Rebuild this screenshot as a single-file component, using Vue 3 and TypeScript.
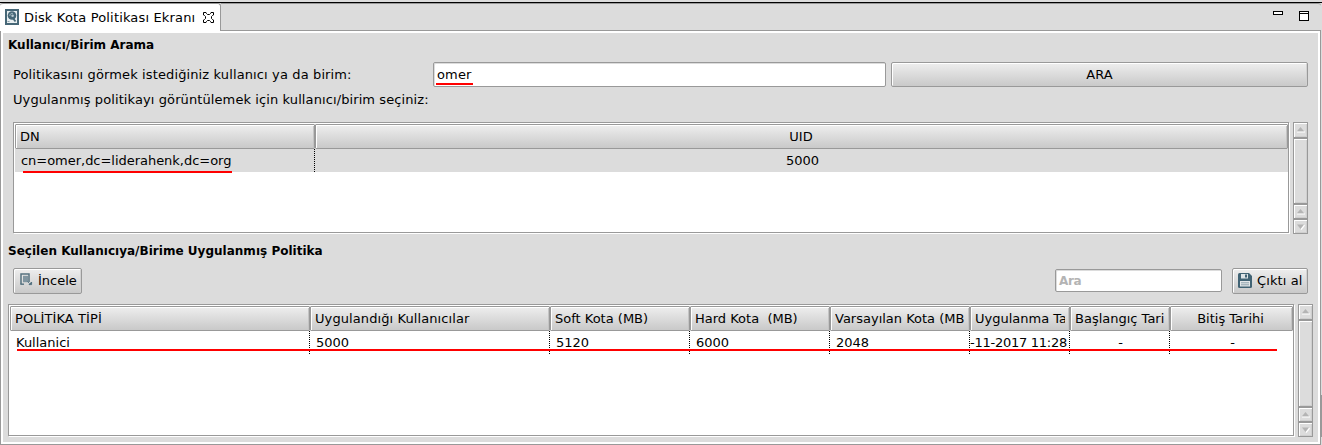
<script setup lang="ts">
interface Column {
  title: string
  value: string
  kind?: string
}

const columns: Column[] = [
  { title: 'POLİTİKA TİPİ', value: 'Kullanici', kind: 'wide' },
  { title: 'Uygulandığı Kullanıcılar', value: '5000', kind: 'wide' },
  { title: 'Soft Kota (MB)', value: '5120' },
  { title: 'Hard Kota  (MB)', value: '6000' },
  { title: 'Varsayılan Kota (MB', value: '2048' },
  { title: 'Uygulanma Ta', value: '-11-2017 11:28', kind: 'date' },
  { title: 'Başlangıç Tari', value: '-', kind: 'dash' },
  { title: 'Bitiş Tarihi', value: '-', kind: 'center' },
]
const scrollParts: string[] = ['up', 'thumb', 'up', 'down']
</script>

<template>
  <div class="window">
    <div class="tabbar">
      <div class="tab">
        <svg class="tab-icon" width="14" height="16" viewBox="0 0 14 16">
          <rect x="1" y="1" width="12" height="14" fill="#e9eff1" stroke="#466777" stroke-width="2" />
          <circle cx="7" cy="6.5" r="4.3" fill="#466777" />
          <path d="M4.8 6.8a2.4 2.4 0 0 1 3-2.4" fill="none" stroke="#a9bdc6" />
          <circle cx="7.6" cy="6.8" r="1.3" fill="#b9c9d0" />
          <path d="M7.5 8.5l3 4" stroke="#466777" stroke-width="1.8" />
          <path d="M2.5 12.5h2" stroke="#8ba1ab" />
        </svg>
        <span class="tab-title">Disk Kota Politikası Ekranı</span>
        <svg class="close" width="11" height="11" viewBox="0 0 11 11">
          <path d="M.5 .5h2.5l.5 1l1 1h2l1-1l.5-1h2.5v2.5l-1 .5l-1 1v2l1 1l1 .5v2.5h-2.5l-.5-1l-1-1h-2l-1 1l-.5 1h-2.5v-2.5l1-.5l1-1v-2l-1-1l-1-.5z" fill="#fff" stroke="#000" />
        </svg>
      </div>
      <div class="strip">
        <svg width="36" height="10" viewBox="0 0 36 10" shape-rendering="crispEdges">
          <path d="M.5 .5h9v3h-9zM26.5 .5h9v9h-9zM27 2.5h8" fill="#fff" stroke="#000" />
        </svg>
      </div>
    </div>

    <div class="content">
      <h2 class="first-heading">Kullanıcı/Birim Arama</h2>
      <div class="search-row">
        <label>Politikasını görmek istediğiniz kullanıcı ya da birim:</label>
        <div class="field name-field">omer<i class="mark"></i></div>
        <div class="button search-button">ARA</div>
      </div>
      <p class="hint">Uygulanmış politikayı görüntülemek için kullanıcı/birim seçiniz:</p>
      <div class="table-row users-row">
        <div class="table users">
          <div class="tr head">
            <div class="th">DN</div>
            <div class="th centered">UID</div>
          </div>
          <div class="tr body selected">
            <div class="td dn">cn=omer,dc=liderahenk,dc=org</div>
            <div class="td centered">5000</div>
          </div>
          <i class="mark"></i>
        </div>
        <div class="scrollbar">
          <div v-for="(part, i) in scrollParts" :key="i" :class="['part', part]">
            <svg v-if="part !== 'thumb'" width="9" height="6" viewBox="0 0 9 6">
              <template v-if="part === 'up'">
                <path d="M1 5h8" stroke="#fff" />
                <path d="M4.5 0L8 4.3H1z" fill="#b4b4b4" />
              </template>
              <template v-else>
                <path d="M8.5 1L5 5.5" stroke="#fff" stroke-width="1.5" />
                <path d="M4.5 5L8 .5H1z" fill="#b4b4b4" />
              </template>
            </svg>
          </div>
        </div>
      </div>
      <h2 class="second-heading">Seçilen Kullanıcıya/Birime Uygulanmış Politika</h2>
      <div class="toolbar">
        <div class="button inspect">
          <svg width="13" height="13" viewBox="0 0 13 13">
            <path d="M1 11V1h8v8" fill="none" stroke="#55717f" stroke-width="1.5" />
            <path d="M.3 11.2h3.7" stroke="#55717f" stroke-width="1.4" />
            <path d="M3 2.8h5v6.4H3z" fill="#8095a0" />
            <path d="M7.5 8.5l2 2M9 11.6h2.6V9z" fill="#466777" stroke="#466777" stroke-width=".8" />
          </svg>
          <span>İncele</span>
        </div>
        <div class="field filter">Ara</div>
        <div class="button export">
          <svg width="14" height="15" viewBox="0 0 14 15">
            <path d="M0 1.5Q0 0 1.5 0H11l3 3v10.5q0 1.5-1.5 1.5h-11Q0 15 0 13.5z" fill="#416374" />
            <path d="M3 1h7v4.5H3z" fill="#dce3e6" />
            <path d="M7 1.5h2v3H7z" fill="#416374" />
            <path d="M2 8h10v5.5H2z" fill="#e3e7e9" />
            <path d="M3 9.8h8M3 11.8h8" stroke="#8da1ab" />
          </svg>
          <span>Çıktı al</span>
        </div>
      </div>
      <div class="table-row policy-row">
        <div class="table policies">
          <div class="tr head">
            <div v-for="c in columns" :key="c.title" :class="['th', c.kind]"><span>{{ c.title }}</span></div>
          </div>
          <div class="tr body">
            <div v-for="c in columns" :key="c.title" :class="['td', c.kind]">{{ c.value }}</div>
          </div>
          <i class="mark"></i>
        </div>
        <div class="scrollbar">
          <div v-for="(part, i) in scrollParts" :key="i" :class="['part', part]">
            <svg v-if="part !== 'thumb'" width="9" height="6" viewBox="0 0 9 6">
              <template v-if="part === 'up'">
                <path d="M1 5h8" stroke="#fff" />
                <path d="M4.5 0L8 4.3H1z" fill="#b4b4b4" />
              </template>
              <template v-else>
                <path d="M8.5 1L5 5.5" stroke="#fff" stroke-width="1.5" />
                <path d="M4.5 5L8 .5H1z" fill="#b4b4b4" />
              </template>
            </svg>
          </div>
        </div>
      </div>
    </div>
  </div>
</template>

<style>
body {
  margin: 0;
  background: #dcdcdc;
  overflow: hidden;
}
</style>

<style scoped>
* {
  box-sizing: border-box;
}
.window {
  width: 1322px;
  height: 445px;
  padding-top: 2px;
  background: linear-gradient(#999, #999) right 0 top 395px / 1px 42px no-repeat #dcdcdc;
  color: #000;
  font: 13px/16px "DejaVu Sans", sans-serif;
  white-space: pre;
}
.tabbar {
  display: flex;
  height: 29px;
  border-top: 1px solid #000;
}
.tab {
  display: flex;
  width: 221px;
  height: 28px;
  padding: 6px 0 0 5px;
  background: #fff;
  border: 1px solid #999;
  border-width: 1px 1px 0 0;
  border-radius: 3px 3px 0 0;
}
.tab-icon {
  flex: none;
  margin-top: -1px;
}
.tab-title {
  width: 184px;
  padding-left: 5px;
  letter-spacing: 0.16px;
}
.close {
  flex: none;
  margin-top: 2px;
}
.strip {
  width: 1100px;
  height: 28px;
  padding: 7px 0 0 1052px;
  border: 1px solid #999;
  border-width: 1px 0 1px 0;
  border-radius: 0 3px 0 0;
}
.strip svg {
  display: block;
}
.content {
  width: 1321px;
  height: 414px;
  padding: 2px 5px 0 5px;
  border: solid #999;
  border-width: 0 1px 1px 1px;
  box-shadow: inset 2px 0 #fff, inset -2px 0 #fff, inset 0 2px #fff, inset 0 -2px #fff;
}
h2 {
  margin: 0 0 0 2px;
  font-size: 12px;
  line-height: 16px;
}
.first-heading {
  padding-top: 4px;
  height: 29px;
}
.search-row {
  display: flex;
  height: 25px;
  padding-left: 7px;
}
.search-row label {
  width: 420px;
  padding-top: 5px;
  letter-spacing: 0.125px;
}
.field {
  position: relative;
  background: #fff;
  border: 1px solid #999;
  border-radius: 2px;
  box-shadow: inset 1px 1px #dcdcdc;
}
.name-field {
  width: 453px;
  padding: 4px 0 0 3px;
  letter-spacing: 0.15px;
}
.button {
  display: flex;
  border: 1px solid #999;
  border-radius: 2px;
  background: linear-gradient(#eee, #c9c9c9);
  box-shadow: inset 1px 1px #fff, inset -1px 0 #d2d2d2;
}
.search-button {
  width: 417px;
  margin-left: 5px;
  padding-top: 4px;
  justify-content: center;
}
.hint {
  height: 35px;
  margin: 0 0 0 7px;
  padding-top: 5px;
  letter-spacing: 0.1px;
}
.table-row {
  display: flex;
}
.users-row {
  height: 112px;
  padding-left: 7px;
}
.policy-row {
  height: 133px;
  padding-left: 2px;
}
.table {
  position: relative;
  border: 1px solid #999;
  background: #fff;
  box-shadow: 1px 1px #fff;
  padding: 1px 0 0 1px;
}
.users {
  width: 1276px;
  height: 111px;
}
.policies {
  width: 1286px;
  height: 132px;
}
.tr {
  display: grid;
}
.users .tr {
  grid-template-columns: 300px 973px;
}
.policies .tr {
  grid-template-columns: 300px 240px 140px 140px 140px 100px 100px 123px;
}
.head {
  height: 25px;
}
.body {
  height: 23px;
}
.selected {
  background: #dcdcdc;
}
.th {
  height: 25px;
  padding: 4px 3px 0 4px;
  overflow: hidden;
  border: 1px solid #999;
  border-radius: 1px;
  background: linear-gradient(#eee, #c9c9c9);
  box-shadow: inset 1px 1px #fff, inset -1px 0 #c4c4c4;
}
.th span {
  display: block;
  overflow: hidden;
}
.th.wide {
  letter-spacing: 0.09px;
}
.td {
  padding: 4px 0 0 6px;
  overflow: hidden;
  background: repeating-linear-gradient(#000 0 1px, transparent 1px 2px) right 0 top 0 / 1px 100% no-repeat;
}
.td:last-child {
  background: none;
}
.td.dn {
  letter-spacing: -0.03px;
}
.centered,
.center,
.td.dash {
  text-align: center;
}
.th.centered {
  padding-right: 5px;
}
.th.center {
  padding-right: 6px;
}
.td.centered {
  padding-left: 2px;
}
.td.dash {
  padding-left: 1px;
}
.td.center {
  padding-left: 2px;
}
.th.date {
  padding-right: 4px;
}
.td.date {
  padding-left: 0;
  letter-spacing: -0.26px;
}
.mark {
  position: absolute;
  height: 2px;
  background: #f00;
}
.name-field .mark {
  left: 2px;
  top: 20px;
  width: 37px;
}
.users .mark {
  left: 9px;
  top: 48px;
  width: 209px;
}
.policies .mark {
  left: 8px;
  top: 44px;
  width: 1260px;
}
.scrollbar {
  display: flex;
  flex-direction: column;
  width: 15px;
  height: 100%;
  margin-left: 4px;
  border: 1px solid #999;
}
.part {
  flex: none;
  height: 15px;
  padding: 4px 0 0 2px;
  border-bottom: 1px solid #999;
  background: #dcdcdc;
  box-shadow: inset 1px 1px #fff, inset -1px -1px #cfcfcf;
}
.part svg {
  display: block;
}
.part + .part {
  border-top: 1px solid #999;
}
.part:last-child {
  height: 14px;
  border-bottom: 0;
}
.part.thumb {
  flex: 1;
}
.second-heading {
  height: 34px;
  padding-top: 9px;
  letter-spacing: 0.02px;
}
.toolbar {
  display: flex;
  height: 36px;
  padding-left: 7px;
}
.inspect {
  width: 69px;
  height: 26px;
  padding: 4px 0 0 6px;
}
.inspect span {
  padding-left: 5px;
}
.filter {
  width: 167px;
  height: 23px;
  margin: 1px 10px 0 973px;
  padding: 3px 0 0 3px;
  color: #b4b4b4;
  font-size: 12px;
  font-weight: bold;
  line-height: 16px;
  letter-spacing: -0.3px;
}
.export {
  width: 76px;
  height: 26px;
  padding: 4px 0 0 5px;
}
.export span {
  padding-left: 5px;
  letter-spacing: 0.1px;
}
</style>
